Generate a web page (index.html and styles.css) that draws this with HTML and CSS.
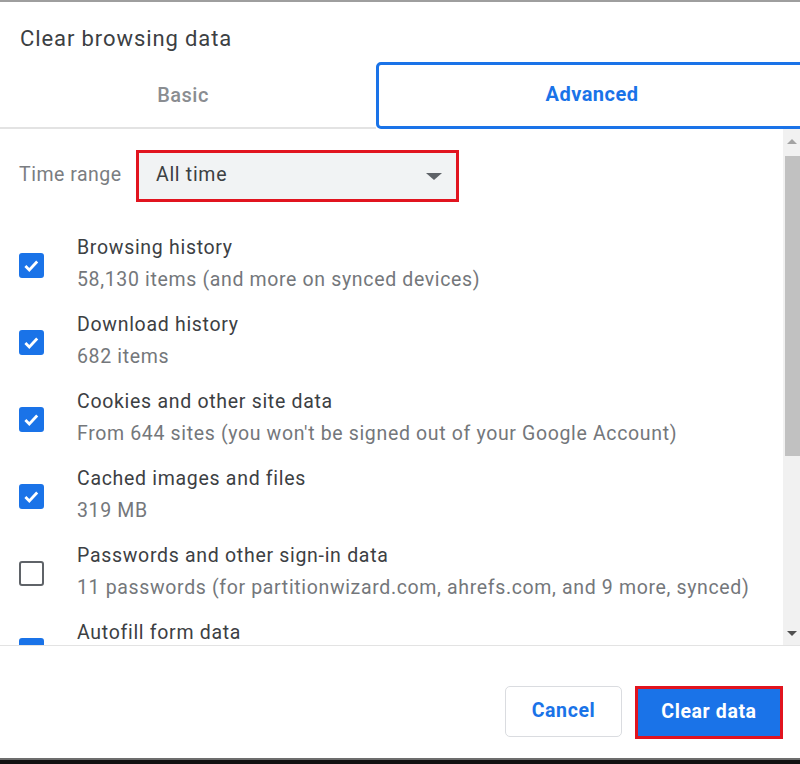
FILE: index.html
```html
<!DOCTYPE html>
<html lang="en">

<head>
    <meta charset="UTF-8">
    <meta name="viewport" content="width=device-width, initial-scale=1.0">
    <title>Clear browsing data</title>
    <link rel="stylesheet" href="styles.css">
</head>

<body>
    <div class="dialog">
        <h1 class="title">Clear browsing data</h1>

        <div class="tabs">
            <div class="tab tab-basic">Basic</div>
            <div class="tab tab-advanced">Advanced</div>
        </div>

        <div class="body">
            <div class="list">
                <div class="range-row">
                    <span class="range-label">Time range</span>
                    <div class="select">
                        <span>All time</span>
                        <span class="select-arrow"></span>
                    </div>
                </div>

                <div class="item">
                    <span class="check checked">
                        <svg viewBox="0 0 24 24"><path d="M5 12.5l4.5 4.5 9-9.5"/></svg>
                    </span>
                    <div class="item-text">
                        <div class="item-title">Browsing history</div>
                        <div class="item-sub">58,130 items (and more on synced devices)</div>
                    </div>
                </div>

                <div class="item">
                    <span class="check checked">
                        <svg viewBox="0 0 24 24"><path d="M5 12.5l4.5 4.5 9-9.5"/></svg>
                    </span>
                    <div class="item-text">
                        <div class="item-title">Download history</div>
                        <div class="item-sub">682 items</div>
                    </div>
                </div>

                <div class="item">
                    <span class="check checked">
                        <svg viewBox="0 0 24 24"><path d="M5 12.5l4.5 4.5 9-9.5"/></svg>
                    </span>
                    <div class="item-text">
                        <div class="item-title">Cookies and other site data</div>
                        <div class="item-sub">From 644 sites (you won't be signed out of your Google Account)</div>
                    </div>
                </div>

                <div class="item">
                    <span class="check checked">
                        <svg viewBox="0 0 24 24"><path d="M5 12.5l4.5 4.5 9-9.5"/></svg>
                    </span>
                    <div class="item-text">
                        <div class="item-title">Cached images and files</div>
                        <div class="item-sub">319 MB</div>
                    </div>
                </div>

                <div class="item">
                    <span class="check"></span>
                    <div class="item-text">
                        <div class="item-title">Passwords and other sign-in data</div>
                        <div class="item-sub">11 passwords (for partitionwizard.com, ahrefs.com, and 9 more, synced)</div>
                    </div>
                </div>

                <div class="item">
                    <span class="check checked">
                        <svg viewBox="0 0 24 24"><path d="M5 12.5l4.5 4.5 9-9.5"/></svg>
                    </span>
                    <div class="item-text">
                        <div class="item-title">Autofill form data</div>
                        <div class="item-sub"></div>
                    </div>
                </div>
            </div>

            <div class="scrollbar">
                <div class="scroll-btn"><span class="arrow-up"></span></div>
                <div class="scroll-track">
                    <div class="scroll-thumb"></div>
                </div>
                <div class="scroll-btn"><span class="arrow-down"></span></div>
            </div>
        </div>

        <div class="footer">
            <button class="btn btn-cancel">Cancel</button>
            <button class="btn btn-clear">Clear data</button>
        </div>
    </div>
    <div class="bottom-bar"></div>
</body>

</html>
```

FILE: styles.css
```css
body {
    margin: 0;
    width: 800px;
    height: 764px;
    overflow: hidden;
    background-color: #fff;
    font-family: 'Roboto', 'Liberation Sans', sans-serif;
    color: #3c4043;
}

.dialog {
    display: flex;
    flex-direction: column;
    height: 756px;
    border-top: 2px solid #9e9e9e;
    overflow: hidden;
}

.title {
    margin: 0;
    height: 60px;
    box-sizing: border-box;
    padding: 22px 0 0 20px;
    font-size: 22px;
    font-weight: 400;
    line-height: 30px;
    letter-spacing: 0.9px;
    color: #3c4043;
}

.tabs {
    display: flex;
    height: 67px;
}

.tab {
    display: flex;
    align-items: center;
    justify-content: center;
    box-sizing: border-box;
    font-size: 20px;
    font-weight: 500;
    letter-spacing: 0.5px;
}

.tab-basic {
    width: 376px;
    padding-right: 10px;
    color: #8a8d91;
    border-bottom: 2px solid #e3e3e3;
}

.tab-advanced {
    flex: 1;
    margin-right: -8px;
    padding-bottom: 3px;
    color: #1a73e8;
    font-weight: 700;
    border: 3px solid #1a73e8;
    border-radius: 5px;
}

.body {
    display: flex;
    height: 516px;
    overflow: hidden;
}

.list {
    flex: 1;
    padding: 21px 0 0 19px;
}

.range-row {
    display: flex;
    align-items: center;
    gap: 14px;
    margin-bottom: 31px;
}

.range-label {
    flex-shrink: 0;
    width: 103px;
    padding-bottom: 3px;
    white-space: nowrap;
    font-size: 19.5px;
    letter-spacing: 0.5px;
    color: #7a7d81;
}

.select {
    display: flex;
    align-items: center;
    justify-content: space-between;
    width: 323px;
    height: 52px;
    box-sizing: border-box;
    padding: 0 14px 3px 17px;
    background-color: #f1f3f4;
    border: 3px solid #e1141f;
    font-size: 19.5px;
    letter-spacing: 0.7px;
    color: #3c4043;
}

.select-arrow {
    width: 0;
    height: 0;
    margin-top: 3px;
    border-left: 8px solid transparent;
    border-right: 8px solid transparent;
    border-top: 7px solid #5f6368;
}

.item {
    display: flex;
    align-items: center;
    gap: 33px;
    margin-bottom: 13px;
}

.check {
    width: 25px;
    height: 25px;
    box-sizing: border-box;
    flex-shrink: 0;
    border: 2px solid #5f6368;
    border-radius: 3px;
}

.check.checked {
    background-color: #1a73e8;
    border-color: #1a73e8;
}

.check svg {
    display: block;
    width: 21px;
    height: 21px;
    fill: none;
    stroke: #fff;
    stroke-width: 3.2;
}

.item-title {
    font-size: 19.5px;
    line-height: 30px;
    letter-spacing: 0.7px;
    color: #3c4043;
}

.item-sub {
    height: 34px;
    font-size: 19.5px;
    line-height: 34px;
    letter-spacing: 0.65px;
    color: #74777b;
}

.scrollbar {
    display: flex;
    flex-direction: column;
    width: 17px;
    background-color: #f1f1f1;
}

.scroll-btn {
    display: flex;
    align-items: center;
    justify-content: center;
    height: 24px;
}

.arrow-up {
    border-left: 5px solid transparent;
    border-right: 5px solid transparent;
    border-bottom: 5px solid #a3a3a3;
}

.arrow-down {
    border-left: 5px solid transparent;
    border-right: 5px solid transparent;
    border-top: 5px solid #505050;
}

.scroll-track {
    flex: 1;
    padding: 3px 0 0 2px;
}

.scroll-thumb {
    height: 300px;
    background-color: #c1c1c1;
}

.footer {
    display: flex;
    justify-content: flex-end;
    align-items: flex-start;
    gap: 13px;
    flex: 1;
    padding: 40px 17px 0 0;
    border-top: 1px solid #e3e3e3;
}

.btn {
    height: 51px;
    box-sizing: border-box;
    padding: 0 0 3px;
    font-family: 'Roboto', 'Liberation Sans', sans-serif;
    font-size: 19.5px;
    font-weight: 700;
    letter-spacing: 0.6px;
    border-radius: 5px;
    cursor: pointer;
}

.btn-cancel {
    width: 117px;
    background-color: #fff;
    color: #1a73e8;
    border: 1px solid #dadce0;
}

.btn-clear {
    width: 148px;
    height: 53px;
    background-color: #1a73e8;
    color: #fff;
    border: 3px solid #e1141f;
    border-radius: 0;
}

.bottom-bar {
    height: 4px;
    border-top: 2px solid #6d6d6d;
    background-color: #111;
}
```
